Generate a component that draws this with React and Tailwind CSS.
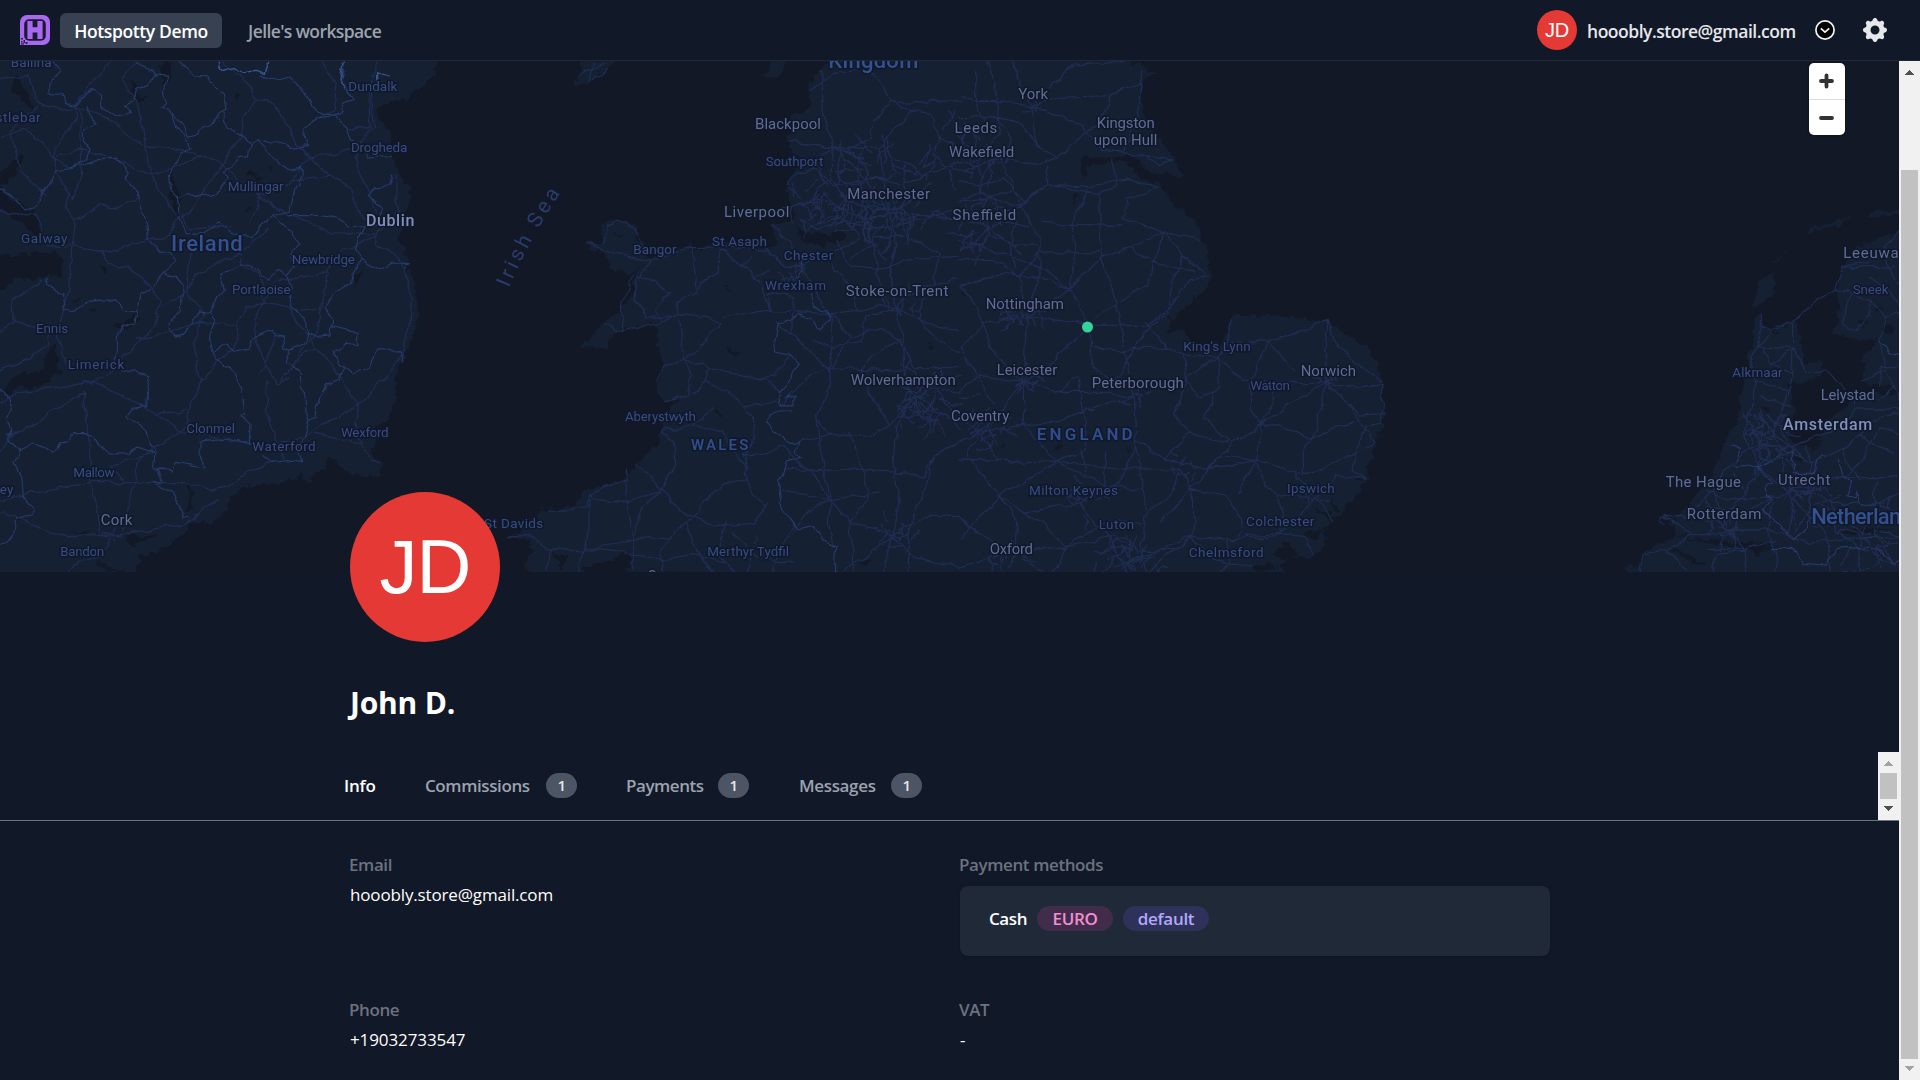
import React from "react";
import { HiCog } from "react-icons/hi";

/* ---------- map geometry ---------- */

const IRELAND = {
  land: "M-60,-20 L1313,-20 1313,33 1305,75 1265,105 1222,150 1165,150 1130,180 1140,215 1175,235 1172,290 1180,340 1210,380 1235,430 1225,470 1200,500 1195,560 1215,590 1225,650 1250,710 1248,760 1262,785 1240,830 1235,870 1208,920 1185,960 1190,1030 1165,1090 1130,1110 1125,1170 1115,1195 1145,1220 1135,1255 1060,1255 990,1210 960,1240 925,1285 905,1240 895,1270 850,1280 750,1290 690,1320 680,1370 620,1400 570,1400 540,1440 480,1480 420,1500 400,1600 -60,1600Z",
  water:
    "M-60,610L70,605 170,590 190,640 175,670 110,680 45,675 20,710 -60,725Z M-60,395L0,400 30,440 100,480 130,540 100,545 60,510 0,470 -60,440Z M-60,1030L0,1020 20,990 60,960 120,950 150,890 170,860 175,940 190,950 160,970 120,1005 60,995 30,1015Z M482,40L515,40 510,80 495,110 482,75Z M40,80L60,85 85,130 95,180 70,150 40,125Z M705,125L725,130 718,152 705,145Z M510,350L520,380 540,440 535,490 520,460 505,390Z M340,820L390,795 410,765 425,790 380,825Z M740,350L790,378 775,380 742,365Z M735,480L760,455 745,485Z M1060,670L1085,650 1085,680 1065,700Z M-60,390L0,370 45,320 70,310 40,380 0,400 -60,410Z M390,90L410,110 405,125 445,140 410,150 390,120Z M570,1280L578,1310 575,1365 565,1370 562,1310Z M380,1430L430,1440 480,1435 440,1450 400,1465 380,1455Z M205,1420L275,1425 250,1432Z M280,1500L330,1530 380,1540 320,1543Z M800,345L820,352 805,358Z M222,735L240,730 228,745Z M270,760L282,765 278,780Z M300,640L315,645 308,655Z",
  borders: [
    "M160,35L180,65 150,95 145,125 190,130 195,155 230,165 260,130 285,118 305,135 305,170 350,195 395,185 370,160 400,150 410,120 440,105 465,70 500,75 490,120 495,160 480,175 520,190 530,230 555,250 570,290 540,310 520,345 508,370 515,410 535,430 540,490",
    "M400,33L430,50 460,60 470,75",
    "M540,33L590,80 620,78 645,110 670,130 678,175 655,185 635,220 605,225 600,255 570,260 550,220 520,185",
    "M665,180L680,230 720,250 750,280 775,262 810,275 840,270 870,285 920,280 910,230 960,200 1000,195 1030,185 1025,160 1060,150 1045,110 1020,95 1030,60 1025,33",
    "M780,75L830,90 870,80 920,130 950,180 1000,195 1040,230 1050,270 1090,290 1100,320 1175,315",
    "M265,165L270,200 285,215 250,240 250,270 270,290 260,320 220,350 165,358 155,395 130,415 115,460 75,470 45,440 20,425 0,410",
    "M220,350L290,325 350,320 385,365 375,380 415,420 420,470 440,510 445,560 475,595 510,595 532,625 495,655 445,715 420,720 410,775 370,770 345,740 300,740 255,745 230,775 195,770 190,720 145,700 140,675",
    "M750,280L745,310 710,320 700,345 680,350 665,360 685,380 650,430 600,430 560,425 540,435",
    "M775,262L810,310 870,355 905,350 900,400 885,410 870,480 820,490 750,555 705,550 660,510 610,545 560,550 550,520 535,500",
    "M820,490L865,530 880,550 900,575 870,610 880,640 860,670 830,650 800,680 775,650 740,630 700,650 660,660 670,710 650,730 630,780 600,775 570,820 530,850 505,830 505,800 545,770 545,740 550,695 495,660",
    "M870,490L920,490 960,490 1000,495 1050,520 1095,520 1080,545 1065,590 1090,620 1060,660 1055,690 1000,720 975,760 995,800 990,840 940,845 920,835 915,790 865,760 875,700 860,665",
    "M1090,620L1140,650 1180,630 1225,635",
    "M1175,370L1170,400 1120,405 1105,430 1145,470 1140,520 1095,520",
    "M630,780L645,800 625,850 650,920 690,940 725,1000 735,1080 720,1080 750,1110 748,1165 690,1150 600,1160 600,1200 620,1235 525,1220 520,1245 470,1240 490,1280 460,1280 520,1310 550,1380 570,1380",
    "M645,890L680,870 710,890 750,885 765,850 820,830 850,850 855,880 870,885 855,925 900,950 905,1000 920,1020 925,1085 910,1150 895,1175 905,1220 865,1215 810,1220 795,1200",
    "M870,885L915,870 920,835 M990,815L1040,825 1075,840 1070,875 1035,870 1005,895 1020,930 1060,955 1105,940 1130,890 1200,890 1212,920",
    "M1035,940L1015,975 980,990 950,1050 945,1085 925,1085",
    "M410,775L405,810 370,820 355,850 355,895 335,925 380,950 450,960 440,1000 437,1055 400,1060 375,1090 410,1105 440,1125 455,1170 465,1190 460,1240 490,1240",
    "M460,1190L405,1175 390,1195 330,1195 295,1165 270,1135 220,1135 205,1155 180,1160 160,1190 100,1160 65,1190 45,1220 65,1260 70,1320 100,1365 95,1375 50,1385 45,1430 20,1460 0,1465",
    "M0,1000L20,1025 35,1060 22,1095 35,1125 22,1150 65,1190",
  ],
  bright: ["M655,33L670,60 700,52 730,68 770,60 790,70 800,36", "M1030,33L1020,90 1040,115 M1130,95L1130,70 1165,80"],
  roads: [
    "M0,85L90,70 105,150 180,175 240,170 300,190 360,230 430,285 560,300 665,335 760,420 860,485 1000,540 1125,545",
    "M335,33L260,120 230,160 225,210 160,310 165,355 210,430 200,460 225,520 215,590 210,680 190,770 172,850 195,920",
    "M30,240L110,165 M30,240L60,360 140,430 M0,260L70,235 130,275 160,320 200,345",
    "M415,33L360,80 410,150 430,240 450,370 530,490 M450,370L350,325 240,290 160,318 M450,370L530,345 600,310",
    "M240,170L240,300 245,380 215,440",
    "M670,33L750,110 770,150 730,200 725,260 665,335 600,430 545,500 M770,150L820,155 860,220 895,285 990,370 1055,410 1065,470 1095,500",
    "M960,33L1005,100 1000,180 940,210 M1045,230L1110,230 1105,110 M1135,33L1110,110 1120,230 1070,290 1070,340 1110,430 1130,480",
    "M780,440L850,480 M895,285L930,320 860,400 780,430 750,510 M930,320L1080,290 M990,370L870,385",
    "M220,510L300,460 340,470 420,435 M0,480L110,490 140,580 210,580 300,600 400,575 500,550 540,495",
    "M300,600L330,635 380,640 430,680 480,740 460,820 380,900 330,960 280,980 M480,760L540,730 600,660 720,600 800,530",
    "M720,600L725,635 780,660 790,745 740,770 710,810 705,880 M570,600L560,720 610,780 580,860 595,960 605,975 M545,495L570,530 700,520",
    "M790,745L860,760 940,870 1025,965 M790,745L760,800 770,870 830,990 870,975 M790,745L830,690 980,660 990,620 1060,580 1125,550",
    "M985,660L970,740 950,830 870,940 840,990 M900,770L950,765 M830,840L800,920 780,960",
    "M1125,545L1130,580 1180,600 1215,640 1235,720 1230,820 1205,900 1170,960 1075,1050 1070,1130 1080,1165 M1185,370L1195,480 1125,545",
    "M605,975L575,1040 555,1120 460,1175 420,1210 370,1420 M605,975L690,890 705,885 M410,855L500,840 590,805 700,815",
    "M280,980L180,1000 60,1010 0,1040 M280,980L420,1050 550,1130 660,1150 760,1165 820,1165 900,1150 1075,1050",
    "M250,1010L265,1130 275,1280 300,1430 330,1435 M250,1015L160,1065 100,1110 20,1140",
    "M800,980L805,1090 830,1160 850,1210 M940,1135L1080,1165 1110,1210 1145,1220 M835,990L900,910 950,880 1020,960 1075,1050",
    "M0,1335L90,1310 270,1280 420,1280 560,1280 640,1300 690,1290 740,1250 820,1220 M0,1370L60,1385 130,1420 200,1440 340,1435 450,1420 560,1400 650,1330",
    "M330,1230L400,1210 460,1190 M330,1230L370,1270 M205,1543L220,1520 300,1500 330,1440 M0,1190L40,1130 M0,950L90,910 150,870 145,840 40,800 0,830",
    "M40,800L35,740 130,680 M465,1080L560,1065 M345,1410L345,1455 M310,1425L370,1440",
  ],
};

const WALES = {
  land: "M1500,-20 L1060,-20 1050,33 1030,50 985,95 985,135 1005,160 960,185 930,195 922,260 935,300 960,320 950,360 925,385 915,420 935,460 945,500 910,510 875,520 895,570 870,590 820,580 780,585 740,560 690,580 640,590 630,560 625,585 560,600 500,620 465,660 460,720 420,770 370,810 330,850 292,885 360,875 378,890 390,850 430,825 520,812 530,830 530,880 555,935 530,980 545,1035 600,1040 560,1060 545,1120 525,1170 475,1220 440,1270 380,1290 320,1300 270,1350 200,1365 175,1355 180,1395 85,1440 140,1445 165,1480 130,1520 200,1600 1500,1600Z",
  extra:
    "M365,515L400,508 435,502 470,520 468,545 500,590 500,630 440,665 390,640 370,600 345,590 320,572 370,570Z M300,0L410,0 410,30 365,65 340,95 280,102 305,70Z M865,0L920,0 915,60 885,88 850,75 870,60Z",
  water:
    "M950,520L980,545 1040,548 1090,530 1110,545 1060,575 1000,575 960,555Z M745,885L775,898 770,905 748,892Z M700,1060L722,1075 712,1080Z M1340,865L1358,875 1350,885Z M740,700L750,700 748,715Z M405,550L430,540 420,555Z M215,1490L270,1500 250,1530 225,1510Z M310,1525L400,1510 440,1480 450,1530 400,1600 310,1600Z M1140,1520L1175,1495 1150,1530Z",
  borders: [
    "M960,625L972,650 950,670 M995,720L1000,765 1045,770 1045,800 1020,825 990,795 955,780 930,805 895,810 885,850 890,890 930,900 958,930 935,950 920,1000 895,1015 900,1050 945,1050 945,1025 915,1030 M940,1065L905,1065 870,1080 858,1100 885,1130 925,1160 960,1160 945,1190 960,1205 920,1220 910,1260 895,1270 900,1320 915,1370 955,1420 1000,1410 1025,1450 1070,1470 1065,1560",
  ],
  bright: [],
  roads: [
    "M320,570L400,600 510,625 640,585 740,580 860,590 910,640 970,640 1060,600 1140,560",
    "M372,570L380,520 435,505 470,545 490,590 M510,625L470,680 465,740 500,790 590,790 M510,625L560,610 M470,670L510,675 570,720 530,770 540,810",
    "M375,810L410,830 530,810 600,780 590,740 650,715 640,650 640,585 M465,665L425,750 425,830 M600,795L605,870 610,915 555,935 530,980",
    "M725,590L710,660 655,700 M725,590L790,640 840,690 870,770 820,775 730,790 M790,640L810,610 M600,780L680,790 720,810 650,890 610,915",
    "M610,915L690,940 820,970 890,960 930,900 M610,915L635,960 625,1020 560,1040 M690,940L680,985 640,1010 M820,970L860,970 900,1020",
    "M680,985L740,1010 790,1055 900,1040 M545,1125L640,1110 700,1060 M545,1125L580,1160 590,1225 540,1300 470,1220 M640,1110L725,1130 760,1190 800,1240 790,1200 860,1190 910,1170",
    "M790,1055L820,1080 820,1160 790,1220 800,1275 850,1350 M800,1275L720,1285 650,1370 570,1440 540,1480 M540,1300L610,1370 710,1410 820,1400 860,1340",
    "M205,1370L320,1350 330,1310 440,1270 M330,1310L350,1330 430,1340 540,1300 M440,1240L435,1320 465,1450 460,1543 M330,1320L330,1420 300,1500 300,1543",
    "M85,1440L150,1440 210,1480 340,1475 465,1450 570,1440 M210,1480L205,1543 M465,1450L480,1370 540,1300 M340,1475L450,1490 560,1510 640,1490 740,1520",
    "M550,1543L540,1480 M620,1400L650,1480 700,1543 M735,1400L710,1480 760,1543 M760,1420L830,1500 940,1520 M830,1440L800,1543 M940,1400L900,1480 880,1543",
    "M910,1170L960,1230 1010,1260 1050,1330 1045,1400 1060,1470 M915,1240L1000,1245 1110,1240 1240,1245 M895,1300L1050,1330 1200,1310",
    "M1050,1330L970,1380 930,1440 M1050,1330L1110,1400 1200,1420 1235,1440 1330,1380 1440,1380 M960,1160L1050,1135 1180,1140 1230,1110 1290,1040",
    "M1010,1090L1050,1140 M890,810L935,840 1000,900 1045,940 1050,1000 1010,1080 1020,1180 1050,1320 M1045,940L980,970 905,1050 M1045,940L1140,945 1270,950",
    "M1045,940L1060,850 1050,790 990,680 970,640 M935,840L940,730 865,720 870,770 1050,780 1110,850 1050,940",
    "M1050,780L1130,770 1210,750 1245,760 1370,820 1440,830 M1130,770L1110,700 1060,640 M1210,750L1190,650 1180,560 1220,500",
    "M1025,60L1030,200 1060,290 1055,380 1100,450 1220,470 M1080,270L1080,380 1120,430 M990,120L1060,70 1160,50 1210,110 1235,155 1440,150 M1235,155L1180,210 1170,260 1100,300 930,270",
    "M930,270L990,280 1060,290 1200,290 1290,180 1350,190 1380,260 1440,290 M1290,180L1235,155 M1225,260L1230,320 1290,340 1330,370 1440,330",
    "M930,310L980,330 1060,300 M925,400L940,370 1000,350 1060,400 1130,390 1200,380 1260,400 1340,370 M940,460L1010,440 1070,460 1150,500 1260,480 1340,490 1440,500",
    "M960,500L1010,530 1100,510 1180,530 1250,520 1330,500 M875,520L930,570 970,640 M1060,290L1130,350 1220,470 M1200,290L1210,380 1225,470 1245,560 1230,640 1245,760",
    "M1245,760L1270,860 1275,950 1290,1040 1250,1120 1240,1250 1260,1340 1235,1440 1210,1543 M1245,760L1330,700 1440,680 M1110,850L1200,820 1260,860 1300,940 1440,940",
    "M1245,760L1160,790 1150,860 M1330,700L1320,800 1350,840 1440,900 M1260,860L1180,900 1140,945 1170,1020 1230,1110 M1290,1040L1380,1070 1440,1120 M1290,1040L1340,980 1440,960",
    "M1110,1130L1150,1240 1160,1330 1110,1400 1120,1543 M1235,1440L1160,1500 1090,1543 M1235,1440L1300,1500 1440,1530 M1240,1250L1330,1260 1360,1200 1440,1160 M1360,1200L1330,1320 1290,1400 1280,1543",
    "M1130,350L1150,430 1140,500 M1270,340L1280,420 1260,480 1290,560 1380,600 M1070,560L1110,640 1190,650 1300,620 1440,610 M1380,600L1360,700 M1000,860L1060,880 1150,860",
    "M300,80L330,50 M330,95L345,40 M310,60L380,45 M340,90L385,60",
  ],
};

const ENGLAND = {
  land: "M-10,-20L500,-20 510,33 560,55 592,70 545,95 540,130 552,190 580,240 630,300 670,375 630,365 590,372 560,350 530,320 500,305 460,320 395,320 380,312 365,325 360,390 385,345 460,330 500,330 540,375 600,400 625,440 660,465 700,500 735,570 753,655 745,700 700,740 665,770 640,800 615,835 660,830 700,870 780,870 800,830 808,790 850,785 920,783 1000,790 1105,800 1160,840 1220,880 1250,920 1268,980 1268,1060 1278,1080 1265,1100 1268,1130 1245,1170 1225,1230 1220,1275 1190,1320 1130,1380 1105,1400 1085,1430 1105,1445 1080,1480 1040,1500 980,1500 960,1530 975,1543 975,1600 -10,1600Z",
  water:
    "M340,430L350,435 345,455 338,450Z M490,1180L520,1190 510,1195Z M290,1165L310,1170 300,1180Z M120,1165L135,1172 125,1178Z M935,1490L980,1455 1010,1490 990,1500 960,1500Z M875,1525L940,1520 960,1535 900,1543Z M1060,1355L1110,1370 1130,1395 1105,1385Z M1110,1310L1135,1360 1125,1370Z M1030,1430L1090,1415 1070,1450Z M8,720L25,715 15,728Z M1190,1268L1210,1270 1200,1278Z M615,780L640,810 630,812Z",
  borders: [],
  bright: [],
  roads: [
    "M0,135L50,150 110,150 210,170 M80,33L105,100 115,200 M160,33L180,110 215,165 M265,115L340,45 420,40 500,33 M215,165L300,140 450,135 545,95 530,200 495,300",
    "M215,165L230,280 290,320 240,340 0,300 M225,170L360,220 430,300 500,305 635,325 600,340 540,305 M290,320L410,220 455,135 M455,320L470,400 420,425 260,400 190,450",
    "M260,345L260,400 200,450 100,520 M260,400L370,405 500,385 600,410 M600,410L500,440 490,500 615,540 720,560 M420,425L420,520 425,610 470,750 520,1030 530,1170 560,1370",
    "M545,60L540,130 M245,510L335,515 490,520 M335,515L370,450 385,400 M335,515L350,590 330,705 365,770 385,820 400,940 470,990",
    "M425,610L330,705 240,640 0,560 M425,610L510,585 615,540 580,630 570,690 480,745 M510,585L575,630 700,650 M615,540L670,610 750,670 M670,610L640,680 620,780 555,830 450,1000",
    "M750,670L690,680 620,770 M180,450L240,560 240,680 200,790 190,980 M330,705L220,670 130,660 0,700 M330,705L200,790 M200,790L385,815 560,815 615,775",
    "M385,815L320,880 200,985 M190,980L300,1010 430,1010 520,1030 M400,880L480,890 550,880 620,880 670,900 780,910 M670,900L680,980 720,1030 770,1010 M555,800L620,880 M470,750L410,790",
    "M780,910L690,960 640,1080 700,1140 810,1160 M780,910L850,980 1100,985 M780,910L775,1000 730,1090 790,1140 820,1160 M810,795L805,860 775,910 M920,860L875,990 870,1060 905,1110",
    "M920,860L800,870 M920,860L970,850 1105,800 1095,880 1100,985 M920,860L1010,950 M1105,800L1130,870 1190,930 1265,980 M1100,985L1180,940 M1100,985L1190,1000 1268,990 M1100,985L1200,1080 1275,1075",
    "M905,1110L1000,1040 1100,985 1070,1120 1030,1180 1030,1260 M905,1110L820,1160 690,1300 600,1400 M905,1110L940,1110 1050,1145 1180,1100 M905,1110L890,1215 830,1310 M905,1110L940,1040 940,990",
    "M530,1150L610,1210 740,1240 890,1215 1000,1250 1065,1320 1120,1390 M740,1240L780,1200 890,1215 M890,1215L920,1290 950,1310 1060,1330 M1060,1330L1000,1400 940,1440 800,1450 690,1440",
    "M1060,1250L1190,1190 1245,1165 1210,1110 1160,1045 M1060,1330L1130,1260 1220,1270 1170,1240 1190,1190 M1060,1250L1010,1255 M1265,1100L1220,1110 1190,1180 M1268,990L1265,1100",
    "M665,1240L700,1310 700,1440 640,1480 570,1543 M665,1240L510,1240 300,1220 M665,1240L620,1330 560,1370 540,1480 560,1543 M690,1300L800,1320 850,1400 835,1440",
    "M610,1210L690,1130 M530,1170L480,1280 360,1340 190,1370 120,1320 20,1200 M290,1220L120,1320 0,1440 M290,1220L190,1110 190,980 M290,1220L380,1180 370,1070 355,970",
    "M520,1030L430,1050 370,1070 290,1100 190,1110 60,1130 M190,980L130,1060 60,1130 20,1200 M190,980L60,960 0,1010 M290,1220L440,1290 550,1300 M290,1220L0,1210",
    "M0,880L70,810 180,790 M0,880L50,960 100,1050 M70,810L30,730 0,700 M70,810L100,900 190,980 M180,670L190,790 M0,620L100,620 180,670 240,600 420,600",
    "M120,1320L170,1390 165,1480 320,1470 440,1390 545,1400 M320,1470L250,1400 190,1370 M320,1470L460,1440 540,1480 640,1480 M320,1470L280,1543 M165,1480L0,1530 M165,1480L250,1543",
    "M0,1380L60,1440 165,1480 M360,1340L440,1290 M360,1340L400,1400 450,1440 500,1543 M690,1440L600,1480 460,1530 M690,1440L750,1500 810,1520 880,1530 M800,1450L810,1520 780,1543 M850,1440L960,1430 1030,1440 1060,1490",
    "M950,1310L970,1380 960,1430 M0,330L60,340 120,320 240,340 M60,340L60,430 90,520 60,600 M0,390L60,400 130,380 200,450 M0,450L90,440 180,460 M90,520L150,580 230,580 M0,500L90,520",
    "M120,320L150,380 180,450 M115,200L150,260 140,340 M0,200L115,200 180,215 230,280 M50,60L50,150 90,250 M90,520L40,570 0,590 M150,580L160,640",
    "M0,1080L60,1130 M60,1130L110,1210 M0,1160L60,1130 M440,1190L435,1290 M360,1180L380,1260 M350,965L300,1010",
  ],
};

const HOLLAND = {
  land: "M1100,130L1000,160 940,180 880,210 855,255 835,310 830,330 840,380 822,460 880,480 960,480 910,520 912,600 970,620 900,640 860,680 800,720 790,760 740,800 700,790 680,740 700,720 712,690 690,650 690,610 720,610 780,590 790,545 730,550 720,460 700,425 640,450 610,435 600,402 585,410 580,470 560,560 545,640 540,700 520,750 490,800 460,870 420,930 375,980 330,1020 345,1060 330,1080 260,1105 240,1150 200,1160 195,1220 1100,1220Z",
  extra:
    "M582,360L600,310 630,272 648,290 645,330 610,370 585,382Z M635,245L710,195 690,210 640,250Z M750,150L800,128 885,110 820,140 755,160Z M918,100L935,94 1090,92 1090,102 930,112Z",
  water:
    "M330,1060L400,1075 500,1085 640,1095 560,1110 430,1085 380,1075Z M320,1100L380,1120 440,1160 400,1150Z M720,770L790,780 760,810 730,800Z M930,620L1017,625 1017,640 950,640Z M820,1060L900,1045 1010,1050 900,1065Z M560,1100L650,1105 590,1120Z M900,425L930,430 910,445Z M980,440L1000,435 990,460 970,460Z M600,675L630,680 615,695Z M950,380L970,385 955,405Z M700,830L740,840 730,850Z M635,455L660,452 655,462Z",
  borders: [
    "M497,795L540,805 522,860 570,855 595,865 620,850 660,825 700,812 700,880 760,880 785,825 800,825",
    "M595,865L620,890 640,905 615,920 620,950 635,955 612,990 640,1020 665,1035 685,1070 705,1080 740,1050 760,1010",
    "M640,1105L700,1105 730,1150 800,1155 830,1105 900,1100 950,1110 1000,1145 1020,1140 M835,845L850,890 875,905 860,945 885,950 890,930 900,970 940,975 M960,480L990,515 1017,520",
  ],
  bright: [],
  roads: [
    "M600,402L608,440 M608,435L635,452 695,430 780,350 830,325 850,260 930,250 M695,430L695,600 680,650 660,700 640,780 M608,435L590,500 570,530 590,600 580,640 570,690",
    "M590,500L635,460 M590,500L690,505 M610,505L630,550 695,580 M635,555L700,505 745,580 800,572 855,625 M830,325L930,360 980,415 960,480 975,570 1017,660",
    "M930,360L930,400 890,450 850,430 860,380 875,345 M980,415L1017,400 M850,260L880,265 1000,260 M980,250L1017,310 M1017,150L975,200 980,250 M930,290L980,330 1017,380",
    "M975,570L910,600 M590,600L680,635 M600,650L690,680 M570,690L555,760 570,800 490,870 460,930 380,1010 310,1010 M600,690L640,760 690,800 740,840",
    "M550,700L580,750 640,780 M555,760L640,770 M570,800L650,800 700,820 760,850 850,800 900,760 M690,800L800,760 850,740 880,690 1017,690",
    "M900,760L930,790 1000,820 M930,790L900,850 850,890 830,900 M900,760L920,720 1017,700 M730,800L760,850 740,930 700,960 M740,930L850,890 1010,890",
    "M740,930L640,950 500,960 440,930 M740,930L820,970 950,970 1017,940 M740,930L750,1000 700,1060 M460,930L500,1050 550,1100 560,1176 M500,1050L640,1050 750,1090 900,1070 1017,1070",
    "M310,1010L350,1030 400,1070 500,1060 M500,1060L440,960 M400,1070L320,1110 250,1120 240,1176 M320,1110L380,1170 M560,1110L470,1120 460,1176 M440,1105L560,1105 650,1080",
    "M640,950L620,1050 650,1120 640,1176 M700,960L800,1060 810,1176 M820,970L830,1060 900,1100 900,1176 M950,900L940,980 900,1070 M950,970L1017,1000 M1017,760L960,740 930,790",
    "M570,800L600,860 560,940 500,1000 M590,860L650,900 700,960 M440,980L560,1000 640,950 M520,880L560,940 M850,800L860,850 900,900 M990,950L950,1060 1000,1150 M900,1176L960,1140 1010,1150",
    "M1017,560L960,560 960,620 M880,690L880,640 M1000,620L960,660 M700,960L680,1070 M460,1050L450,980 M300,1025L304,1010 320,1004 334,1012 M300,1025L312,1032",
  ],
};

/* Small deterministic generator used for the dense street webs around cities. */
function random(seed) {
  let s = seed;
  return () => {
    s = (s * 16807) % 2147483647;
    return s / 2147483647;
  };
}

function streetWeb(cx, cy, radius, count, seed) {
  const next = random(seed);
  let d = "";
  for (let i = 0; i < count; i++) {
    const a = next() * Math.PI * 2;
    const r = radius * Math.pow(next(), 0.8);
    let x = cx + Math.cos(a) * r;
    let y = cy + Math.sin(a) * r * 0.85;
    let heading = next() * Math.PI * 2;
    d += `M${x.toFixed(1)},${y.toFixed(1)}`;
    for (let k = 0; k < 4; k++) {
      heading += (next() - 0.5) * 1.3;
      x += Math.cos(heading) * radius * 0.17;
      y += Math.sin(heading) * radius * 0.17;
      d += `L${x.toFixed(1)},${y.toFixed(1)}`;
    }
  }
  return d;
}

const CITY_WEBS = [
  [888, 212, 46, 34, 11],
  [815, 208, 26, 22, 23],
  [858, 165, 40, 16, 37],
  [965, 150, 36, 24, 41],
  [925, 398, 34, 34, 53],
  [896, 305, 20, 10, 61],
  [985, 225, 38, 22, 71],
  [1020, 314, 22, 14, 83],
  [1024, 380, 16, 10, 97],
  [978, 425, 26, 14, 101],
  [893, 535, 20, 12, 113],
  [1080, 500, 22, 10, 127],
  [1125, 563, 32, 26, 131],
  [1015, 560, 22, 10, 139],
  [1135, 397, 12, 8, 149],
  [1181, 467, 14, 8, 151],
  [1312, 494, 14, 8, 163],
  [1328, 380, 12, 8, 173],
  [1768, 445, 26, 26, 181],
  [1728, 530, 22, 14, 191],
  [1806, 490, 28, 20, 193],
  [1760, 425, 18, 12, 197],
  [1870, 545, 36, 14, 199],
  [790, 268, 22, 10, 211],
  [1035, 108, 10, 6, 223],
];

/* [text, x, baseline, width, kind] */
const LABELS = [
  ["Ballina", 10.7, 67.3, 41, "town"],
  ["Castlebar", -22, 122, 62.7, "town"],
  ["Dundalk", 348.3, 90.8, 49, "town"],
  ["Drogheda", 351, 152, 56.3, "town"],
  ["Mullingar", 227.7, 191.3, 56, "town"],
  ["Galway", 21, 243, 46.3, "town"],
  ["Dublin", 366, 225.6, 48.3, "capital"],
  ["Ireland", 171, 251.3, 71.7, "country"],
  ["Newbridge", 291.7, 263.7, 63.3, "town"],
  ["Portlaoise", 232, 294, 58.7, "town"],
  ["Ennis", 36, 333, 32.3, "town"],
  ["Limerick", 67.7, 369.3, 56.6, "town"],
  ["Clonmel", 186.3, 433.2, 48.7, "town"],
  ["Wexford", 341, 436.7, 47.7, "town"],
  ["Waterford", 252.3, 451.2, 63.4, "town"],
  ["Mallow", 73.3, 477.2, 41.4, "town"],
  ["Killarney", -38, 493.5, 51.3, "town"],
  ["Cork", 100.7, 524.8, 31.6, "city"],
  ["Bandon", 60.3, 556.2, 44, "town"],
  ["Kingdom", 828.3, 68, 90, "country"],
  ["Blackpool", 755, 129.2, 66, "city"],
  ["Southport", 765.7, 165.8, 57.6, "town"],
  ["Manchester", 847.3, 199.3, 82.7, "city"],
  ["Liverpool", 724, 217.3, 65.3, "city"],
  ["St Asaph", 712, 246.4, 55, "town"],
  ["Bangor", 633.3, 253.5, 43.4, "town"],
  ["Chester", 783.7, 260.2, 49.6, "town"],
  ["Wrexham", 765, 290.2, 61, "town"],
  ["Stoke-on-Trent", 845.7, 296.4, 102.6, "city"],
  ["Wolverhampton", 850.7, 385.2, 105, "city"],
  ["Aberystwyth", 625, 421.2, 71, "town"],
  ["WALES", 691, 449.8, 57.3, "region"],
  ["St Davids", 484, 528.2, 59.3, "town"],
  ["Merthyr Tydfil", 707.3, 555.5, 81.7, "town"],
  ["Swansea", 647.7, 580.7, 54, "city"],
  ["York", 1018.3, 99.3, 29.7, "city"],
  ["Leeds", 954.6, 132.8, 42.7, "city"],
  ["Wakefield", 949, 157.2, 65.3, "city"],
  ["Kingston", 1096.7, 127.5, 58, "city"],
  ["upon Hull", 1093.7, 144.9, 63.6, "city"],
  ["Sheffield", 952.5, 220, 63.8, "city"],
  ["Nottingham", 985.7, 309.3, 78.3, "city"],
  ["Leicester", 996.7, 374.6, 60.6, "city"],
  ["Peterborough", 1091.7, 388, 92, "city"],
  ["King's Lynn", 1183.3, 351.2, 67.4, "town"],
  ["Watton", 1250.3, 389.5, 39.7, "town"],
  ["Norwich", 1300.7, 376, 55.3, "city"],
  ["Coventry", 951, 421.2, 58.3, "city"],
  ["ENGLAND", 1036.7, 440.2, 96, "nation"],
  ["Milton Keynes", 1029, 495.2, 89, "town"],
  ["Luton", 1098.7, 528.7, 35.6, "town"],
  ["Oxford", 989.7, 554.2, 43.3, "city"],
  ["Ipswich", 1287, 492.7, 47.7, "town"],
  ["Colchester", 1246, 525.7, 68.3, "town"],
  ["Chelmsford", 1188.7, 557.2, 75, "town"],
  ["Leeuwarden", 1843.3, 258, 88, "city"],
  ["Sneek", 1852.7, 294, 36, "town"],
  ["Alkmaar", 1732.3, 376.8, 50.4, "town"],
  ["Lelystad", 1820.7, 399.7, 54.3, "city"],
  ["Amsterdam", 1783, 429.8, 89.3, "capital"],
  ["The Hague", 1665.7, 487, 75.3, "city"],
  ["Utrecht", 1778, 485.3, 52.3, "city"],
  ["Rotterdam", 1686.7, 518.7, 74.6, "city"],
  ["Netherlands", 1811.3, 523.7, 112, "country"],
];

const LABEL_STYLE = {
  town: "text-[13.5px] fill-[#374c84]",
  city: "text-[15px] fill-[#5f6d95]",
  capital: "text-[16px] font-medium fill-[#8090ba]",
  country: "text-[22px] font-medium fill-[#33508f]",
  nation: "text-[17px] font-semibold fill-[#304c8a]",
  region: "text-[15px] font-semibold fill-[#304c8a]",
};

function TileLand({ area, transform }) {
  return (
    <g transform={transform}>
      <path d={area.land} fill="#152033" />
      {area.extra && <path d={area.extra} fill="#152033" />}
      <path d={area.water} fill="#121825" />
    </g>
  );
}

function TileLines({ area, transform }) {
  return (
    <g transform={transform} fill="none" strokeLinejoin="round" strokeLinecap="round">
      <path d={area.roads.join("")} stroke="#202d52" strokeWidth="3.8" />
      <path d={area.borders.join("")} stroke="#273b6b" strokeWidth="3.4" />
      <path d={area.bright.join("")} stroke="#3a528d" strokeWidth="4" />
    </g>
  );
}

const TILES = [
  [IRELAND, "translate(0 50) scale(.33333 .33801)"],
  [WALES, "translate(480 50) scale(.33333 .33801)"],
  [ENGLAND, "translate(960 50) scale(.33333 .33801)"],
  [HOLLAND, "translate(1560 180) scale(.33333)"],
];

function MapCanvas() {
  return (
    <svg
      className="block h-[511px] w-full bg-[#121825] font-['Roboto','Liberation_Sans',sans-serif]"
      viewBox="0 61 1899 511"
      preserveAspectRatio="none"
      aria-label="Map"
    >
      <defs>
        <filter
          id="coast"
          x="-20"
          y="40"
          width="1945"
          height="550"
          filterUnits="userSpaceOnUse"
          colorInterpolationFilters="sRGB"
        >
          <feTurbulence type="fractalNoise" baseFrequency="0.11" numOctaves="3" seed="4" result="n" />
          <feDisplacementMap in="SourceGraphic" in2="n" scale="11" xChannelSelector="R" yChannelSelector="G" />
        </filter>
        <filter
          id="wiggle"
          x="-20"
          y="40"
          width="1945"
          height="550"
          filterUnits="userSpaceOnUse"
          colorInterpolationFilters="sRGB"
        >
          <feTurbulence type="fractalNoise" baseFrequency="0.07" numOctaves="2" seed="9" result="n" />
          <feDisplacementMap in="SourceGraphic" in2="n" scale="8" xChannelSelector="R" yChannelSelector="G" />
        </filter>
      </defs>
      <g filter="url(#coast)">
        {TILES.map(([area, transform]) => (
          <TileLand key={transform} area={area} transform={transform} />
        ))}
      </g>
      <g filter="url(#wiggle)">
        {TILES.map(([area, transform]) => (
          <TileLines key={transform} area={area} transform={transform} />
        ))}
        <path
          d={CITY_WEBS.map((w) => streetWeb(...w)).join("")}
          fill="none"
          stroke="#202d52"
          strokeWidth="1.2"
          strokeLinejoin="round"
        />
      </g>
      {LABELS.map(([text, x, y, width, kind]) => (
        <text
          key={text}
          x={x}
          y={y}
          textLength={width}
          stroke="#10182a"
          strokeWidth="3"
          strokeLinejoin="round"
          paintOrder="stroke"
          className={LABEL_STYLE[kind]}
        >
          {text}
        </text>
      ))}
      <path id="sea" d="M509,288 Q530,238 561,192" fill="none" />
      <text className="fill-[#2a3c6e] text-[21px]">
        <textPath href="#sea" textLength="108">
          Irish Sea
        </textPath>
      </text>
      <circle cx="1087.5" cy="327" r="5.5" fill="#34d399" />
    </svg>
  );
}

/* ---------- chrome ---------- */

function Logo() {
  return (
    <svg viewBox="0 0 30 30" className="size-[30px] shrink-0">
      <path d="M7,0H23A7,7 0 0 1 30,7V23A7,7 0 0 1 23,30H0V7A7,7 0 0 1 7,0Z" fill="#a869ee" />
      <rect x="4.2" y="4.2" width="21.6" height="21.6" rx="5" fill="#1a1b33" />
      <path d="M7.4,6h5.2v6.2h4.8V6h5.2v18h-5.2v-6.6h-4.8V24H7.4z" fill="#a869ee" />
      <path d="M1,23h2v1.5H1z M1,26h1.5v1.5H1z M3.5,25h1.5v3H3.5z M5.5,27h2v2h-2z M1,28.2h3v1.3H1z" fill="#2a2147" />
    </svg>
  );
}

function Arrow({ down, muted }) {
  return (
    <svg viewBox="0 0 9 5" className="h-[5px] w-[9px] shrink-0" shapeRendering="crispEdges">
      <path d={down ? "M0,0H9L5,5H4Z" : "M4,0H5L9,5H0Z"} fill={muted ? "#a3a3a3" : "#505050"} />
    </svg>
  );
}

function Header() {
  return (
    <header className="flex h-[61px] shrink-0 items-center justify-between border-b border-[#1f2937] pl-5 pr-[30px] text-[17.5px] font-semibold">
      <div className="flex items-center">
        <Logo />
        <nav className="ml-2.5 flex items-center">
          <a className="flex h-[35px] w-[162px] items-center justify-center rounded-md bg-[#374151] pt-0.5 tracking-[-0.38px] text-white">
            Hotspotty Demo
          </a>
          <a className="ml-[26px] pt-0.5 tracking-[-0.6px] text-[#9ca3af]">Jelle's workspace</a>
        </nav>
      </div>
      <div className="flex items-center">
        <span className="flex size-10 items-center justify-center rounded-full bg-[#e53935] font-['Liberation_Sans',sans-serif] text-xl font-normal tracking-[-0.3px] text-white">
          JD
        </span>
        <span className="ml-2.5 w-[209px] whitespace-nowrap pt-0.5 tracking-[-0.48px] text-[#e5e7eb]">
          hooobly.store@gmail.com
        </span>
        <svg viewBox="0 0 20 20" className="ml-[19px] size-5">
          <circle cx="10" cy="10" r="9.1" fill="#000" stroke="#f3f4f6" strokeWidth="1.7" />
          <path d="M5.8,8.4L10,12.2 14.2,8.4" fill="none" stroke="#f3f4f6" strokeWidth="1.7" />
        </svg>
        <HiCog className="ml-[25px] size-[30px] text-[#e5e7eb]" />
      </div>
    </header>
  );
}

function ZoomControl() {
  return (
    <div className="absolute left-[1809px] top-0.5 flex h-[72px] w-9 flex-col rounded-[5px] bg-white shadow-[0_0_0_2px_rgba(0,0,0,0.1)]">
      <button className="flex h-[37px] items-center justify-center border-b border-[#ddd]">
        <svg viewBox="0 0 16 16" className="size-4">
          <path d="M7.5,2.5V13.5M2,8H13" stroke="#333" strokeWidth="3.8" strokeLinecap="round" />
        </svg>
      </button>
      <button className="flex h-[35px] items-center justify-center">
        <svg viewBox="0 0 16 16" className="size-4">
          <path d="M2,8H13" stroke="#333" strokeWidth="3.8" strokeLinecap="round" />
        </svg>
      </button>
    </div>
  );
}

function Tab({ label, count, active, className }) {
  return (
    <a className={"flex items-center " + className + (active ? " text-white" : " text-[#9ca3af]")}>
      <span className="whitespace-nowrap">{label}</span>
      {count && (
        <span className="ml-auto flex h-[25px] w-[31px] items-center justify-center rounded-full bg-[#4b5563] text-[15px] text-[#e5e7eb]">
          {count}
        </span>
      )}
    </a>
  );
}

function Tabs() {
  return (
    <div className="mt-8 flex h-[69px] justify-between border-b border-[#6b7280]">
      <nav className="flex items-center pb-px pl-[344px] text-[17px] font-semibold">
        <Tab label="Info" active className="w-[81px] tracking-[-0.2px]" />
        <Tab label="Commissions" count="1" className="w-[152px] tracking-[-0.4px]" />
        <Tab label="Payments" count="1" className="ml-[49px] w-[123px] tracking-[-0.45px]" />
        <Tab label="Messages" count="1" className="ml-[50px] w-[123px] tracking-[-0.35px]" />
      </nav>
      <div className="flex w-[21px] flex-col items-center bg-[#f1f1f1]">
        <div className="flex h-[21px] items-end pb-[7px]">
          <Arrow muted />
        </div>
        <div className="h-[26px] w-[17px] bg-[#c1c1c1]" />
        <div className="flex h-[21px] items-start pt-[7px]">
          <Arrow down />
        </div>
      </div>
    </div>
  );
}

function Field({ label, children }) {
  return (
    <div>
      <div className="-ml-px text-[17px] font-semibold leading-[30px] tracking-[-0.4px] text-[#6b7280]">{label}</div>
      {children}
    </div>
  );
}

function Details() {
  return (
    <div className="grid grid-cols-[610px_590px] grid-rows-[145px_auto] pl-[350px] pt-[29px] text-[17px] leading-[30px] text-white">
      <Field label="Email">
        <div className="tracking-[-0.15px]">hooobly.store@gmail.com</div>
      </Field>
      <Field label="Payment methods">
        <div className="mt-[6px] flex h-[70px] items-start rounded-lg bg-[#1f2937] pl-[29px] pt-5 font-semibold leading-[25px] shadow-sm">
          <span className="w-12 tracking-[-0.4px]">Cash</span>
          <span className="flex h-[25px] w-[76px] items-center justify-center rounded-full bg-[#422c4c] tracking-[-0.4px] text-[#f18ed0]">
            EURO
          </span>
          <span className="ml-2.5 flex h-[25px] w-[86px] items-center justify-center rounded-full bg-[#2e3159] tracking-[-0.3px] text-[#b3a8fb]">
            default
          </span>
        </div>
      </Field>
      <Field label="Phone">
        <div className="tracking-[-0.1px]">+19032733547</div>
      </Field>
      <Field label="VAT">
        <div>-</div>
      </Field>
    </div>
  );
}

export default function App() {
  return (
    <div className="flex h-[1080px] w-[1920px] flex-col overflow-hidden bg-[#111827] font-['Open_Sans','Noto_Sans',sans-serif] text-white">
      <Header />
      <div className="flex min-h-0 flex-1">
        <main className="w-[1899px] shrink-0">
          <div className="relative">
            <MapCanvas />
            <ZoomControl />
          </div>
          <div className="relative -mt-20 ml-[350px] flex size-[150px] items-center justify-center rounded-full bg-[#e53935] font-['Liberation_Sans',sans-serif] text-[76px] leading-none tracking-[-1px]">
            JD
          </div>
          <h1 className="ml-[350px] mt-[41px] h-[37px] text-[30px] font-bold leading-[40px] tracking-[-0.2px]">John D.</h1>
          <Tabs />
          <Details />
        </main>
        <div className="flex w-[21px] shrink-0 flex-col items-center bg-[#f1f1f1]">
          <div className="flex h-[109px] items-start pt-[9px]">
            <Arrow />
          </div>
          <div className="w-[17px] flex-1 bg-[#c1c1c1]" />
          <div className="flex h-[21px] items-start pt-[7px]">
            <Arrow down muted />
          </div>
        </div>
      </div>
    </div>
  );
}
